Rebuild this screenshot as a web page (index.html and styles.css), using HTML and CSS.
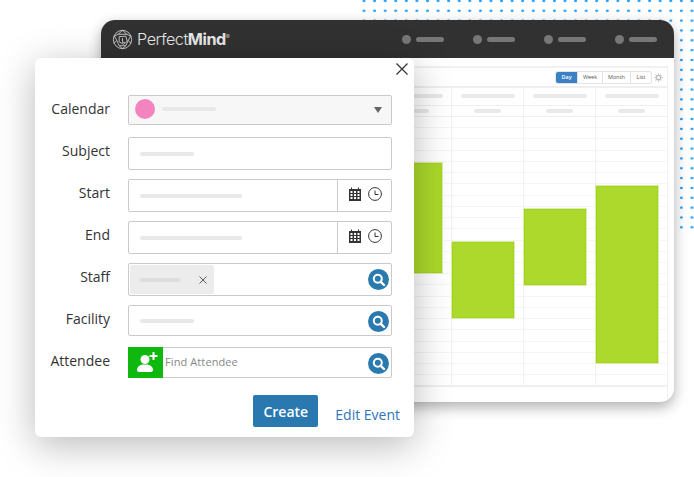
FILE: index.html
```html
<!DOCTYPE html>
<html lang="en">
<head>
<meta charset="utf-8">
<title>PerfectMind calendar</title>
<link rel="stylesheet" href="styles.css">
</head>
<body>
<div class="stage">
  <div class="dots"></div>

  <div class="window">
    <header class="topbar">
      <div class="logo">
        <svg class="logo-mark" viewBox="0 0 22 22" fill="none" stroke="#e8e8e8" stroke-width=".8">
          <circle cx="11" cy="11" r="9.600"/>
          <path d="M11 1.400 6.500 5.500 2.500 7.500 5 12 2 15M11 1.400l4.500 4.100 4 2-2.500 4.500 3 3M6.500 5.500h9M5 12l2.500 5.500L11 20.600l3.500-3.100L17 12M7.500 17.500h7M7.500 8l7-.5L16 13l-4 3-4.500-2.500z"/>
          <path d="M11 9.500v4.500h2.500"/>
        </svg>
        <span class="logo-text">Perfect<b>Mind</b><sup>®</sup></span>
      </div>
      <nav class="top-nav">
        <div class="nav-item"><i></i><span></span></div>
        <div class="nav-item"><i></i><span></span></div>
        <div class="nav-item"><i></i><span></span></div>
        <div class="nav-item"><i></i><span></span></div>
      </nav>
    </header>

    <section class="panel">
      <div class="toolbar">
        <div class="views">
          <span class="view view-on view-day">Day</span>
          <span class="view view-week">Week</span>
          <span class="view view-month">Month</span>
          <span class="view view-list">List</span>
        </div>
        <svg class="gear" viewBox="0 0 12 12" fill="none" stroke="#bdbdbd">
          <circle cx="6" cy="6" r="2.900" stroke-width="1.800"/>
          <path stroke-width="1.500" d="M6 .5v2M6 9.500v2M.5 6h2M9.500 6h2M2.100 2.100l1.400 1.400M8.500 8.500l1.400 1.400M2.100 9.900l1.400-1.400M8.500 3.500l1.400-1.400"/>
        </svg>
      </div>

      <div class="head-row head-one">
        <div class="time-col"></div>
        <div class="col"><span class="bar-long"></span></div>
        <div class="col"><span class="bar-long"></span></div>
        <div class="col"><span class="bar-long"></span></div>
        <div class="col"><span class="bar-long"></span></div>
      </div>
      <div class="head-row head-two">
        <div class="time-col"></div>
        <div class="col"><span class="bar-short"></span></div>
        <div class="col"><span class="bar-short"></span></div>
        <div class="col"><span class="bar-short"></span></div>
        <div class="col"><span class="bar-short"></span></div>
      </div>

      <div class="grid">
        <div class="time-col"></div>
        <div class="col"><div class="event event-a"></div></div>
        <div class="col"><div class="event event-b"></div></div>
        <div class="col"><div class="event event-c"></div></div>
        <div class="col"><div class="event event-d"></div></div>
      </div>
      <div class="panel-foot"></div>
    </section>
  </div>

  <div class="dialog">
    <svg class="close" viewBox="0 0 12 12" fill="none" stroke="#333" stroke-width="1.200"><path d="M.5.5l11 11M11.500.5l-11 11"/></svg>

    <div class="row">
      <span class="label">Calendar</span>
      <div class="field field-select">
        <span class="swatch"></span>
        <span class="ph ph-cal"></span>
        <span class="caret"></span>
      </div>
    </div>

    <div class="row row-subject">
      <span class="label">Subject</span>
      <div class="field"><span class="ph ph-mid"></span></div>
    </div>

    <div class="row row-tight">
      <span class="label">Start</span>
      <div class="field">
        <span class="ph ph-wide"></span>
        <div class="picker">
          <svg class="cal-icon" viewBox="0 0 12 14"><path fill="#333" d="M0 2h2V.5h1V2h6V.5h1V2h2v12H0z"/><path fill="#fff" d="M1.500 4h2v2h-2zM5 4h2v2H5zM8.500 4h2v2h-2zM1.500 7h2v2h-2zM5 7h2v2H5zM8.500 7h2v2h-2zM1.500 10h2v2h-2zM5 10h2v2H5zM8.500 10h2v2h-2z"/></svg>
          <svg class="clock-icon" viewBox="0 0 14 14" fill="none" stroke="#333" stroke-width="1"><circle cx="7" cy="7" r="6.400"/><path d="M7 3.500V7.500h3.500"/></svg>
        </div>
      </div>
    </div>

    <div class="row row-tight">
      <span class="label">End</span>
      <div class="field">
        <span class="ph ph-wide"></span>
        <div class="picker">
          <svg class="cal-icon" viewBox="0 0 12 14"><path fill="#333" d="M0 2h2V.5h1V2h6V.5h1V2h2v12H0z"/><path fill="#fff" d="M1.500 4h2v2h-2zM5 4h2v2H5zM8.500 4h2v2h-2zM1.500 7h2v2h-2zM5 7h2v2H5zM8.500 7h2v2h-2zM1.500 10h2v2h-2zM5 10h2v2H5zM8.500 10h2v2h-2z"/></svg>
          <svg class="clock-icon" viewBox="0 0 14 14" fill="none" stroke="#333" stroke-width="1"><circle cx="7" cy="7" r="6.400"/><path d="M7 3.500V7.500h3.500"/></svg>
        </div>
      </div>
    </div>

    <div class="row row-tight">
      <span class="label">Staff</span>
      <div class="field field-staff">
        <div class="chip">
          <span class="ph ph-chip"></span>
          <svg class="chip-x" viewBox="0 0 8 8" fill="none" stroke="#333" stroke-width=".8"><path d="M.5.500l7 7M7.500.500l-7 7"/></svg>
        </div>
        <svg class="search" viewBox="0 0 21 21"><circle cx="10.500" cy="10.500" r="10.500" fill="#2a7ab0"/><circle cx="9.800" cy="9.800" r="4" fill="none" stroke="#fff" stroke-width="2"/><path d="M12.800 12.800l3.200 3.200" stroke="#fff" stroke-width="2.400" stroke-linecap="round"/></svg>
      </div>
    </div>

    <div class="row row-tight">
      <span class="label">Facility</span>
      <div class="field field-short">
        <span class="ph ph-mid"></span>
        <svg class="search" viewBox="0 0 21 21"><circle cx="10.500" cy="10.500" r="10.500" fill="#2a7ab0"/><circle cx="9.800" cy="9.800" r="4" fill="none" stroke="#fff" stroke-width="2"/><path d="M12.800 12.800l3.200 3.200" stroke="#fff" stroke-width="2.400" stroke-linecap="round"/></svg>
      </div>
    </div>

    <div class="row row-attendee">
      <span class="label">Attendee</span>
      <div class="field field-short field-attendee">
        <span class="add-person">
          <svg viewBox="0 0 35 31" fill="#fff"><circle cx="17" cy="12.500" r="4.500"/><path d="M9 23c0-3.500 3-5.500 8-5.500s8 2 8 5.500c0 1.200-1 2-2 2H11c-1 0-2-.8-2-2z"/><path d="M21.500 8h3V5h2v3h3v2h-3v3h-2v-3h-3z"/></svg>
        </span>
        <span class="find">Find Attendee</span>
        <svg class="search" viewBox="0 0 21 21"><circle cx="10.500" cy="10.500" r="10.500" fill="#2a7ab0"/><circle cx="9.800" cy="9.800" r="4" fill="none" stroke="#fff" stroke-width="2"/><path d="M12.800 12.800l3.200 3.200" stroke="#fff" stroke-width="2.400" stroke-linecap="round"/></svg>
      </div>
    </div>

    <footer class="actions">
      <button class="create" type="button">Create</button>
      <a class="edit" href="#">Edit Event</a>
    </footer>
  </div>
</div>
</body>
</html>
```

FILE: styles.css
```css
* { box-sizing: border-box; }

html, body {
  margin: 0;
  padding: 0;
  background: #fff;
  overflow: hidden;
}

.stage {
  position: relative;
  width: 694px;
  height: 477px;
  overflow: hidden;
  font-family: "Open Sans", "Liberation Sans", sans-serif;
}

.dots {
  position: absolute;
  left: 360px;
  top: 0;
  width: 334px;
  height: 230px;
  background-image: radial-gradient(circle at center, #1a9dff 0, #1a9dff 1px, transparent 1.600px);
  background-size: 10.58px 9.85px;
  background-position: -1.29px -4px;
}

/* Back window */
.window {
  position: absolute;
  left: 101px;
  top: 20px;
  width: 573px;
  height: 382px;
  display: flex;
  flex-direction: column;
  background: #fff;
  border-radius: 14px;
  box-shadow: 0 5px 14px rgba(0, 0, 0, .32);
  overflow: hidden;
}

.topbar {
  flex: 0 0 38px;
  display: flex;
  align-items: center;
  justify-content: space-between;
  padding: 0 0 0 11px;
  background: #313131;
}

.logo {
  display: flex;
  align-items: center;
  gap: 4px;
}

.logo-mark {
  width: 21px;
  height: 21px;
  display: block;
}

.logo-text {
  font-family: "Inter", "Liberation Sans", sans-serif;
  font-weight: 300;
  font-size: 16.200px;
  letter-spacing: -.45px;
  color: #e6e6e6;
}

.logo-text b { font-weight: 700; }

.logo-text sup {
  font-size: 6px;
  vertical-align: 6px;
  line-height: 0;
}

.top-nav {
  display: flex;
  padding-right: 5px;
  gap: 17px;
}

.nav-item {
  display: flex;
  align-items: center;
  width: 54px;
  gap: 5px;
}

.nav-item i {
  width: 9px;
  height: 9px;
  border-radius: 50%;
  background: #777;
}

.nav-item span {
  width: 28px;
  height: 5px;
  border-radius: 3px;
  background: #777;
}

/* Calendar panel */
.panel {
  flex: 1;
  margin: 8px 6px 0 7px;
  display: flex;
  flex-direction: column;
  border: solid #f1f1f1;
  border-width: 2px 1px 0;
}

.toolbar {
  flex: 0 0 20px;
  display: flex;
  align-items: center;
  justify-content: flex-end;
  border-bottom: 2px solid #efefef;
  padding: 0 4px 0 0;
  gap: 3px;
}

.views {
  display: flex;
  height: 11px;
  border-radius: 2px;
  box-shadow: 0 0 0 1px #e3e3e3;
}

.view {
  font-size: 5.500px;
  line-height: 11px;
  text-align: center;
  color: #555;
  border-right: 1px solid #e3e3e3;
}

.view-on {
  background: #3a80c4;
  color: #fff;
  font-weight: 600;
  border-radius: 2px 0 0 2px;
}

.view-day { width: 22px; }
.view-week { width: 25px; }
.view-month { width: 28px; }
.view-list { width: 20px; border-right: 0; }

.gear {
  width: 9px;
  height: 9px;
  display: block;
}

.head-row {
  display: flex;
  border-bottom: 1px solid #f0f0f0;
}

.head-one { flex: 0 0 18px; }
.head-two { flex: 0 0 11px; }

.time-col { flex: 1; }

.col {
  position: relative;
  flex: 0 0 72px;
  display: flex;
  justify-content: center;
  border-left: 1px solid #f2f2f2;
}

.bar-long {
  width: 54px;
  height: 4px;
  margin-top: 6px;
  border-radius: 2px;
  background: #e9e9e9;
}

.bar-short {
  width: 27px;
  height: 4px;
  margin-top: 3px;
  border-radius: 2px;
  background: #e9e9e9;
}

.grid {
  flex: 0 0 270px;
  display: flex;
  border-bottom: 2px solid #efefef;
  background-image: repeating-linear-gradient(to bottom, transparent 0, transparent 10.230px, #f5f5f5 10.230px, #f5f5f5 11.230px);
}

.panel-foot { flex: 1; }

.event {
  position: absolute;
  left: 0;
  width: 62px;
  background: #acd92b;
  border: 1px solid #a4d31d;
  box-shadow: 0 0 0 1px #dcedb0;
}

.event-a { top: 46px; height: 110px; }
.event-b { top: 125px; height: 76px; }
.event-c { top: 92px; height: 76px; }
.event-d { top: 69px; height: 177px; }

/* Dialog */
.dialog {
  position: absolute;
  left: 35px;
  top: 58px;
  width: 379px;
  height: 379px;
  padding: 37px 22px 10px 15px;
  display: flex;
  flex-direction: column;
  background: #fff;
  border-radius: 6px;
  box-shadow: 0 8px 38px rgba(0, 0, 0, .28);
}

.close {
  position: absolute;
  right: 6px;
  top: 5px;
  width: 12px;
  height: 12px;
}

.row {
  display: flex;
  align-items: flex-start;
  gap: 18px;
}

.row-subject { margin-top: 12px; }
.row-tight { margin-top: 9px; }
.row-attendee { margin-top: 11px; }

.label {
  flex: 0 0 60px;
  padding-top: 4px;
  font-size: 14px;
  line-height: 20px;
  text-align: right;
  white-space: nowrap;
  color: #333;
}

.field {
  flex: 0 0 264px;
  height: 33px;
  display: flex;
  align-items: center;
  padding-left: 11px;
  border: 1px solid #cacaca;
  border-radius: 2px;
  background: #fff;
}

.field-select {
  height: 30px;
  padding: 0 9px 2px 6px;
  background: #f7f7f7;
}

.field-short { height: 31px; }

.field-staff { padding-left: 1px; }

.swatch {
  width: 20px;
  height: 20px;
  border-radius: 50%;
  background: #f484c0;
}

.ph {
  height: 4px;
  border-radius: 2px;
  background: #e8e8e8;
}

.ph-cal { width: 54px; margin-left: 7px; }
.ph-mid { width: 54px; }
.ph-wide { width: 102px; }
.ph-chip { width: 40px; margin-left: 10px; background: #dedede; }

.caret {
  margin: 2px 0 0 auto;
  width: 0;
  height: 0;
  border-left: 4px solid transparent;
  border-right: 4px solid transparent;
  border-top: 6px solid #666;
}

.picker {
  margin-left: auto;
  align-self: stretch;
  width: 54px;
  display: flex;
  align-items: center;
  padding: 0 9px 4px 11px;
  gap: 7px;
  border-left: 1px solid #cacaca;
}

.cal-icon {
  width: 12px;
  height: 14px;
  display: block;
}

.clock-icon {
  width: 14px;
  height: 14px;
  display: block;
}

.chip {
  width: 84px;
  height: 29px;
  display: flex;
  align-items: center;
  border-radius: 2px;
  background: #ececec;
}

.chip-x {
  width: 8px;
  height: 8px;
  margin-left: 19px;
  display: block;
}

.search {
  width: 21px;
  height: 21px;
  margin-left: auto;
  margin-right: 2px;
  display: block;
}

.field-short .search { margin-top: 1px; }

.field-attendee { padding-left: 0; border-left: 0; }

.add-person {
  flex: 0 0 35px;
  align-self: stretch;
  margin: -1px 0;
  display: block;
  background: #0fb80f;
}

.add-person svg {
  width: 35px;
  height: 31px;
  display: block;
}

.find {
  margin: 0 0 2px 2px;
  font-size: 11px;
  letter-spacing: .1px;
  color: #888;
}

.actions {
  margin-top: 17px;
  display: flex;
  align-items: flex-end;
  justify-content: flex-end;
  gap: 17px;
  margin-right: -8px;
}

.create {
  width: 65px;
  height: 32px;
  padding: 0;
  border: 0;
  border-radius: 2px;
  font-family: inherit;
  font-size: 14px;
  font-weight: 600;
  color: #fff;
  background: #2a78b0;
}

.edit {
  font-size: 14px;
  line-height: 20px;
  color: #2f75b8;
  text-decoration: none;
  white-space: nowrap;
  margin-bottom: 2px;
}
```
